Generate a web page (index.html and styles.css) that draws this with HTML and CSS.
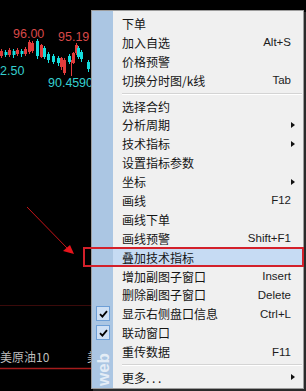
FILE: index.html
```html
<!DOCTYPE html>
<html lang="zh-CN">
<head>
  <meta charset="UTF-8">
  <title>右键菜单</title>
  <meta name="viewport" content="width=device-width, initial-scale=1.0">
  <link rel="stylesheet" href="styles.css">
</head>
<body>

<div class="screen">
  <svg class="chart" width="306" height="391" viewBox="0 0 306 391">
    <g class="up">
      <line x1="1.5" y1="49" x2="1.5" y2="58"/><rect x="0.5" y="51.5" width="2" height="4"/>
      <line x1="9.5" y1="48" x2="9.5" y2="57"/><rect x="8.5" y="50.5" width="2" height="4"/>
      <line x1="17.5" y1="48" x2="17.5" y2="56"/><rect x="16.5" y="50.5" width="2" height="3"/>
      <line x1="25.5" y1="47" x2="25.5" y2="56"/><rect x="24.5" y="49.5" width="2" height="4"/>
      <line x1="29.5" y1="40" x2="29.5" y2="54"/><rect x="28.5" y="42.5" width="2" height="9"/>
      <line x1="32.5" y1="41" x2="32.5" y2="53"/><rect x="31.5" y="43.5" width="2" height="7"/>
      <line x1="41.5" y1="44" x2="41.5" y2="58"/><rect x="40.5" y="45.5" width="2" height="11"/>
      <line x1="61.5" y1="57" x2="61.5" y2="70"/><rect x="60.5" y="58.5" width="2" height="8"/>
      <line x1="64.5" y1="58" x2="64.5" y2="75"/><rect x="63.5" y="60.5" width="2" height="12"/>
      <line x1="71.5" y1="60" x2="71.5" y2="76"/>
      <line x1="73.5" y1="52" x2="73.5" y2="64"/><rect x="72.5" y="53.5" width="2" height="9"/>
      <line x1="76.5" y1="43" x2="76.5" y2="55"/><rect x="75.5" y="45.5" width="2" height="7"/>
    </g>
    <g class="down">
      <line x1="5.5" y1="50" x2="5.5" y2="57"/><rect x="4.5" y="52" width="3" height="3"/>
      <line x1="13.5" y1="49" x2="13.5" y2="58"/><rect x="12.5" y="51" width="3" height="4"/>
      <line x1="21.5" y1="49" x2="21.5" y2="57"/><rect x="20.5" y="51" width="3" height="3"/>
      <line x1="37.5" y1="39" x2="37.5" y2="59"/><rect x="36" y="41" width="3" height="15"/>
      <line x1="44.5" y1="46" x2="44.5" y2="59"/><rect x="43" y="48" width="3" height="9"/>
      <line x1="48.5" y1="52" x2="48.5" y2="63"/><rect x="47" y="54" width="3" height="6"/>
      <line x1="53.5" y1="54" x2="53.5" y2="64"/><rect x="52" y="56" width="3" height="6"/>
      <line x1="58.5" y1="56" x2="58.5" y2="66"/><rect x="57" y="58" width="3" height="5"/>
      <line x1="69.5" y1="54" x2="69.5" y2="64"/><rect x="68" y="56" width="3" height="6"/>
      <line x1="78.5" y1="46" x2="78.5" y2="59"/><rect x="77" y="48" width="3" height="9"/>
      <line x1="81.5" y1="50" x2="81.5" y2="62"/><rect x="80" y="52" width="3" height="7"/>
      <line x1="88.5" y1="60" x2="88.5" y2="72"/><rect x="87" y="62" width="3" height="7"/>
    </g>
    <text class="hi" x="13" y="38">96.00</text>
    <text class="hi" x="58" y="41">95.19</text>
    <text class="lo" x="0" y="75">2.50</text>
    <text class="lo" x="48" y="87">90.45</text>
    <text class="lo" x="79" y="87">90.</text>
    <line class="grid" x1="0" y1="305.5" x2="92" y2="305.5"/>
    <text class="name" x="0" y="362">美原油10</text>
    <text class="name" x="87" y="362">美</text>
    <line class="base" x1="0" y1="368.5" x2="92" y2="368.5"/>
  </svg>

  <div class="menu">
    <div class="item"><span class="label">下单</span></div>
    <div class="item"><span class="label">加入自选</span><span class="key">Alt+S</span></div>
    <div class="item"><span class="label">价格预警</span></div>
    <div class="item"><span class="label">切换分时图/k线</span><span class="key">Tab</span></div>
    <div class="sep"></div>
    <div class="item"><span class="label">选择合约</span></div>
    <div class="item"><span class="label">分析周期</span><span class="sub"></span></div>
    <div class="item"><span class="label">技术指标</span><span class="sub"></span></div>
    <div class="item"><span class="label">设置指标参数</span></div>
    <div class="item"><span class="label">坐标</span><span class="sub"></span></div>
    <div class="item"><span class="label">画线</span><span class="key">F12</span></div>
    <div class="item"><span class="label">画线下单</span></div>
    <div class="item"><span class="label">画线预警</span><span class="key">Shift+F1</span></div>
    <div class="item hot"><span class="label">叠加技术指标</span></div>
    <div class="item"><span class="label">增加副图子窗口</span><span class="key">Insert</span></div>
    <div class="item"><span class="label">删除副图子窗口</span><span class="key">Delete</span></div>
    <div class="item"><span class="check"><svg width="9" height="8" viewBox="0 0 9 8"><path d="M1 4.2 L3.4 6.6 L8 1.2" fill="none" stroke="#000" stroke-width="1.8"/></svg></span><span class="label">显示右侧盘口信息</span><span class="key">Ctrl+L</span></div>
    <div class="item"><span class="check"><svg width="9" height="8" viewBox="0 0 9 8"><path d="M1 4.2 L3.4 6.6 L8 1.2" fill="none" stroke="#000" stroke-width="1.8"/></svg></span><span class="label">联动窗口</span></div>
    <div class="item"><span class="label">重传数据</span><span class="key">F11</span></div>
    <div class="sep"></div>
    <div class="item"><span class="label">更多. . .</span><span class="sub"></span></div>
    <span class="mark">web</span>
  </div>

  <div class="callout"></div>
  <svg class="pointer" width="306" height="391" viewBox="0 0 306 391">
    <line x1="27" y1="207" x2="68" y2="249" stroke="#c41418" stroke-width="1"/>
    <polygon points="63,251 70,245 74,254" fill="#e8141c"/>
  </svg>
</div>

</body>
</html>
```

FILE: styles.css
```css
body { margin: 0; background: #000; font-family: "Noto Sans CJK SC", "Liberation Sans", sans-serif; }
.screen { position: relative; width: 306px; height: 391px; overflow: hidden; background: #000; }
.chart { display: block; }
.chart .up line, .chart .up rect { stroke: #e23c3c; stroke-width: 1; fill: none; }
.chart .down line { stroke: #14dede; stroke-width: 1; }
.chart .down rect { fill: #14dede; }
.chart text { font-family: "Liberation Sans", sans-serif; font-size: 12.5px; }
.chart .hi { fill: #d84848; }
.chart .lo { fill: #35cfcf; }
.chart .name { font-family: "Noto Sans CJK SC", sans-serif; font-size: 12px; fill: #bdbdbd; }
.chart .grid { stroke: #3a0a0a; stroke-width: 1; }
.chart .base { stroke: #a51c1c; stroke-width: 1.5; }

/* popup menu */
.menu { position: absolute; left: 91px; top: 10px; width: 213px; box-sizing: border-box; padding: 3px 0 1px; border: 1px solid #9c9c9c; background: linear-gradient(to right, #abc6e3 0, #abc6e3 21px, #f0f0f0 21px); box-shadow: 2px 2px 0 #2a2a2a; }
.item { position: relative; display: flex; align-items: center; height: 18.9px; padding: 0 7px 0 30px; font-size: 12px; color: #151515; white-space: nowrap; }
.item .label { flex: 1; }
.item .key { margin-right: 5px; font-family: "Liberation Sans", sans-serif; font-size: 11.5px; color: #1c1c1c; }
.item .sub { width: 0; height: 0; border-left: 4px solid #111; border-top: 3.5px solid transparent; border-bottom: 3.5px solid transparent; margin-right: 1px; }
.item.hot { background: linear-gradient(to right, transparent 0, transparent 21px, #c6dbf3 21px); }
.check { position: absolute; left: 4px; top: 2px; width: 12px; height: 13px; border: 1px solid #6e9fd6; background: #cfe0f4; display: flex; align-items: center; justify-content: center; }
.sep { height: 7px; margin: 0 1px 0 30px; background: linear-gradient(#d4d4d4, #d4d4d4) 0 3px / 100% 1px no-repeat, linear-gradient(#fff, #fff) 0 4px / 100% 1px no-repeat; }
.mark { position: absolute; left: 2px; bottom: 2px; writing-mode: vertical-rl; transform: rotate(180deg); font-family: "Liberation Sans", sans-serif; font-weight: bold; font-size: 17px; color: rgba(255, 255, 255, 0.7); }

/* annotation */
.callout { position: absolute; left: 83px; top: 247px; width: 221px; height: 20px; box-sizing: border-box; border: 2px solid #d3202a; }
.pointer { position: absolute; left: 0; top: 0; }
```
